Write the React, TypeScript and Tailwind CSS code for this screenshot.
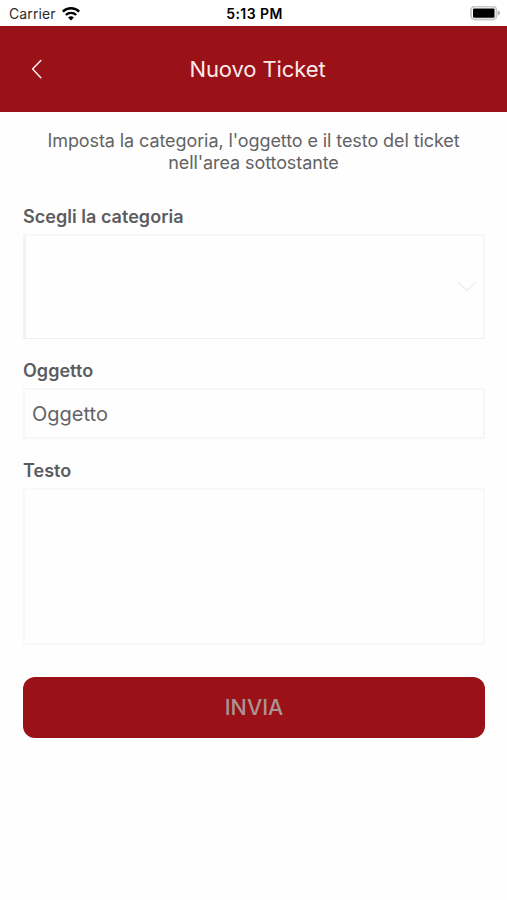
import { useState } from "react";
import type { ReactNode } from "react";

function StatusBar() {
  return (
    <div className="grid h-[25.5px] grid-cols-3 items-center bg-white pt-0.5 pr-[6px] pl-[9px] text-black">
      <div className="flex items-center gap-1.5">
        <span className="text-[14px] leading-none tracking-[0.1px] text-[#2b2b2b]">
          Carrier
        </span>
        <svg width="18" height="14" viewBox="0 0 18 14" fill="none" stroke="currentColor">
          <path d="M.8 4.6a11.8 11.8 0 0 1 16.4 0" strokeWidth="2.4" />
          <path d="M3.8 8a7.4 7.4 0 0 1 10.4 0" strokeWidth="2.3" />
          <path d="M9 13.4 6.1 10.5a4.3 4.3 0 0 1 5.8 0Z" fill="currentColor" stroke="none" />
        </svg>
      </div>
      <span className="pr-px text-center text-[14px] leading-none font-semibold tracking-[0.45px]">
        5:13 PM
      </span>
      <svg className="justify-self-end" width="31" height="15" viewBox="0 0 31 15">
        <rect x="1" y="0.5" width="25.5" height="13" rx="3.8" fill="#fff" stroke="#c9c9c9" strokeWidth="1.9" />
        <rect x="3" y="2.4" width="21.5" height="9.4" rx="1.2" fill="#000" />
        <path d="M27.8 4.6c1.6.5 2.2 1.4 2.2 2.5s-.6 2-2.2 2.5Z" fill="#b5b5b5" />
      </svg>
    </div>
  );
}

function Header() {
  return (
    <header className="grid h-[86px] grid-cols-[60px_1fr_60px] items-center bg-[#9a1117] text-[#fbeaea]">
      <button type="button" aria-label="Indietro" className="flex pl-[31px]">
        <svg width="12" height="20" viewBox="0 0 12 20" fill="none" stroke="currentColor" strokeWidth="1.6" strokeLinecap="round" strokeLinejoin="round">
          <path d="M9.8 1.5 1.6 10l8.2 8.7" />
        </svg>
      </button>
      <h1 className="pt-px pl-2 text-center text-[22px] leading-none tracking-[-0.1px]">
        Nuovo Ticket
      </h1>
    </header>
  );
}

function Field({ label, children }: { label: string; children: ReactNode }) {
  return (
    <label className="flex flex-col gap-[5.5px]">
      <span className="text-[18px] leading-6 font-semibold tracking-[0.03px] text-[#5c5c5e]">
        {label}
      </span>
      {children}
    </label>
  );
}

export default function App() {
  const [subject, setSubject] = useState("");
  const [text, setText] = useState("");

  return (
    <div className="min-h-screen bg-[#fefefe] font-['Inter',sans-serif]">
      <StatusBar />
      <Header />

      <main className="px-[23px] pt-[18.5px]">
        <p className="text-center text-[18px] leading-[21.5px] tracking-[-0.09px] text-[#636365]">
          Imposta la categoria, l'oggetto e il testo del ticket
          <br />
          nell'area sottostante
        </p>

        <form className="mt-[31.5px] flex flex-col gap-[19.5px]">
          <Field label="Scegli la categoria">
            {/* Category picker */}
            <div className="flex h-[105px] w-[462px] items-center justify-end border-t-2 border-r-2 border-b border-l-[3px] border-[#f7f7f7] border-b-[#ededed] border-l-[#f3f3f3] pr-[6px]">
              <svg width="20" height="12" viewBox="0 0 20 12" fill="none" stroke="#efefef" strokeWidth="1.5">
                <path d="m1.5 1.5 8.5 8 8.5-8" />
              </svg>
            </div>
          </Field>

          <Field label="Oggetto">
            <input
              value={subject}
              onChange={(e) => setSubject(e.target.value)}
              placeholder="Oggetto"
              className="h-[51px] w-[462px] border-2 border-[#f7f7f7] px-[7px] text-[20px] text-[#636365] placeholder:text-[#636365]"
            />
          </Field>

          <Field label="Testo">
            <textarea
              value={text}
              onChange={(e) => setText(e.target.value)}
              className="h-[157px] w-[462px] resize-none rounded-[2px] border-2 border-[#f8f8f8] p-2 text-[20px] text-[#636365]"
            />
          </Field>

          <button
            type="button"
            className="mt-3 h-[61px] w-[462px] rounded-xl bg-[#9a1117] text-[21.5px] font-medium text-[#aa9493]"
          >
            INVIA
          </button>
        </form>
      </main>
    </div>
  );
}
